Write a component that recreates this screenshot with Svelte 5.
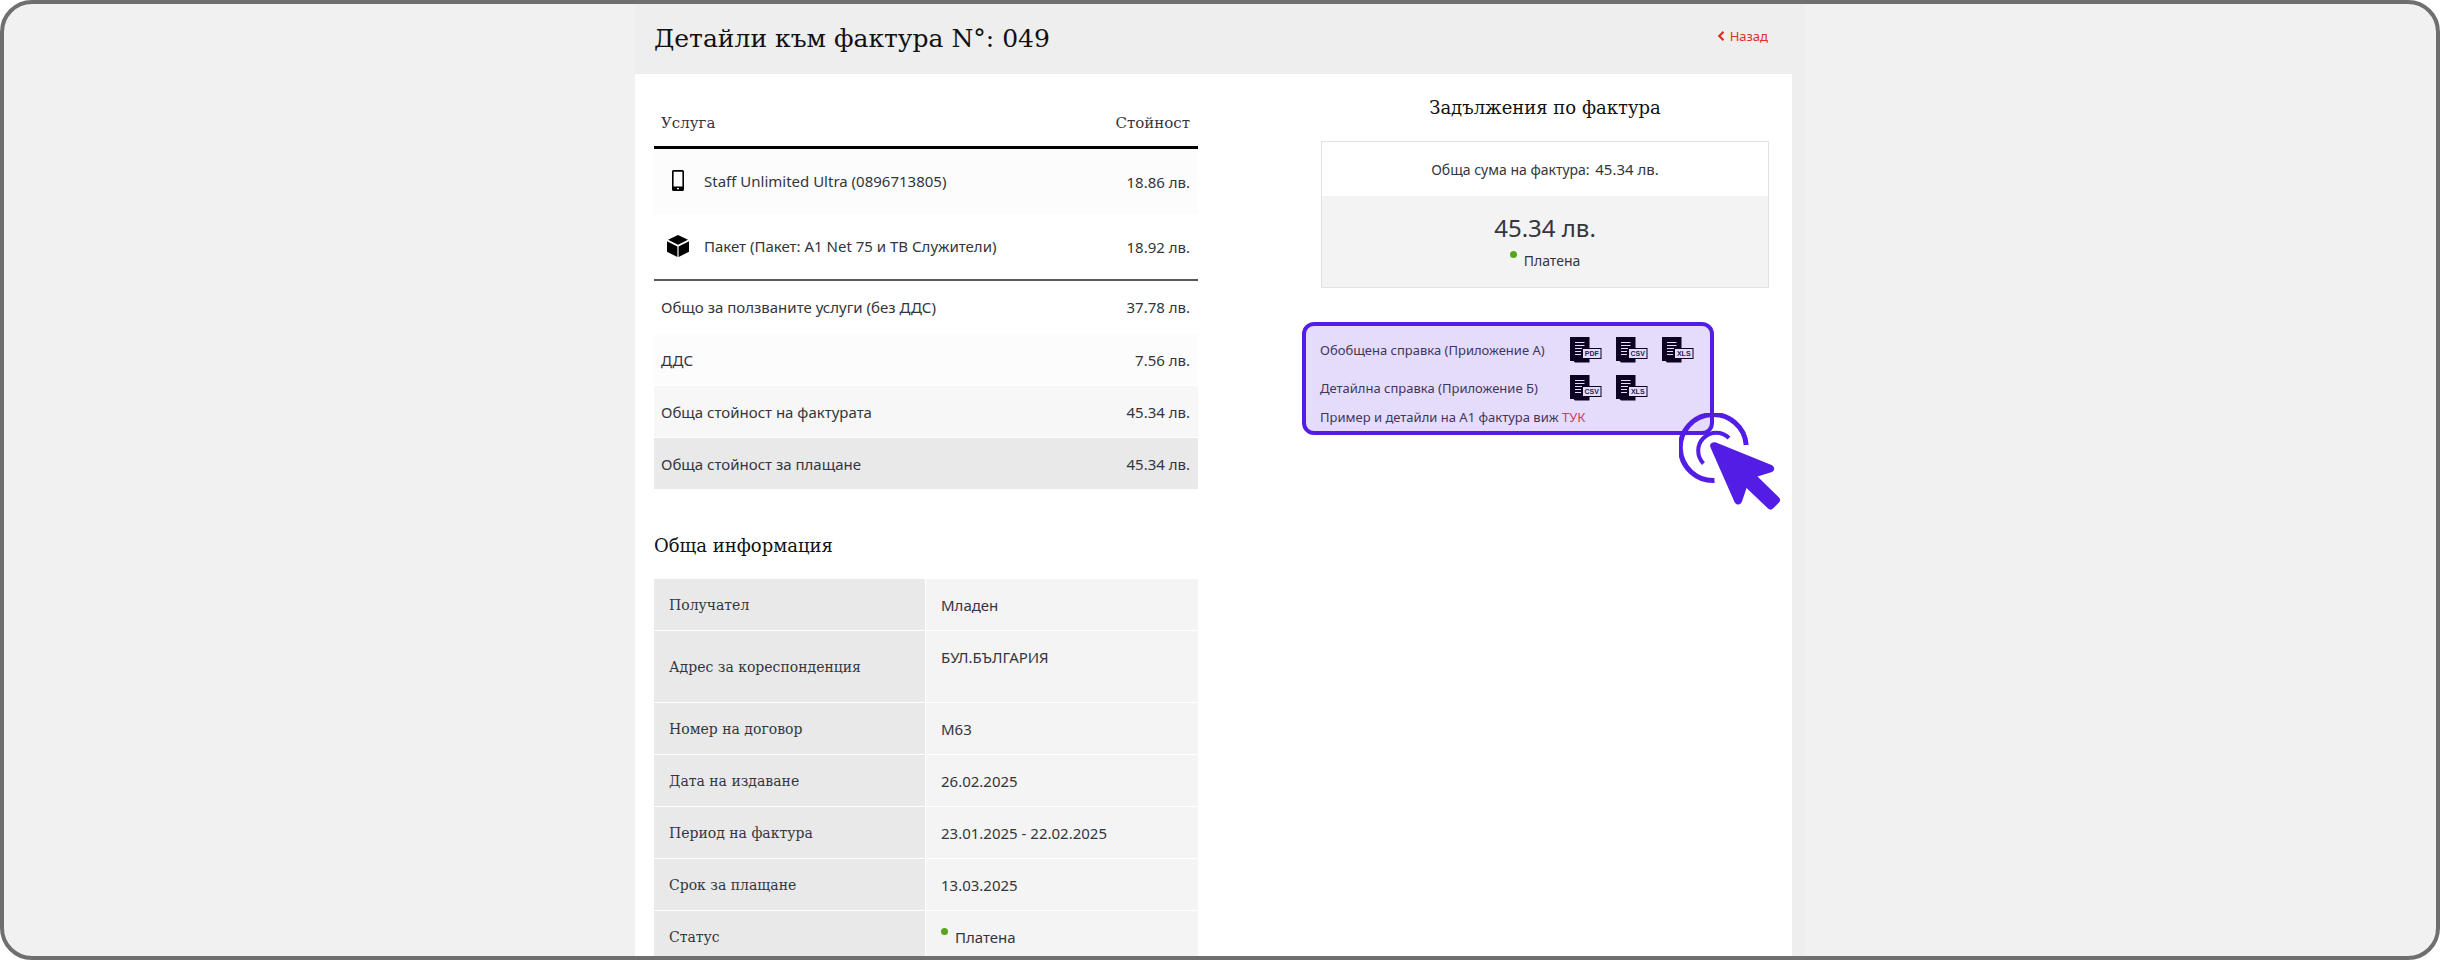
<script>
  const services = [
    { icon: 'phone', name: 'Staff Unlimited Ultra (0896713805)', value: '18.86 лв.' },
    { icon: 'box', name: 'Пакет (Пакет: A1 Net 75 и ТВ Служители)', value: '18.92 лв.' }
  ];

  const totals = [
    { label: 'Общо за ползваните услуги (без ДДС)', value: '37.78 лв.', tone: 'plain' },
    { label: 'ДДС', value: '7.56 лв.', tone: 'faint' },
    { label: 'Обща стойност на фактурата', value: '45.34 лв.', tone: 'light' },
    { label: 'Обща стойност за плащане', value: '45.34 лв.', tone: 'strong' }
  ];

  const info = [
    { label: 'Получател', value: 'Младен' },
    { label: 'Адрес за кореспонденция', value: 'БУЛ.БЪЛГАРИЯ', tall: true },
    { label: 'Номер на договор', value: 'M63' },
    { label: 'Дата на издаване', value: '26.02.2025' },
    { label: 'Период на фактура', value: '23.01.2025 - 22.02.2025' },
    { label: 'Срок за плащане', value: '13.03.2025' },
    { label: 'Статус', value: 'Платена', status: true }
  ];

  const reports = [
    { label: 'Обобщена справка (Приложение А)', formats: ['PDF', 'CSV', 'XLS'] },
    { label: 'Детайлна справка (Приложение Б)', formats: ['CSV', 'XLS'] }
  ];
</script>

<div class="frame" lang="bg">
  <main class="page">
    <header class="head">
      <h1>Детайли към фактура N°: 049</h1>
      <a class="back" href="#back">
        <svg width="8" height="10" viewBox="0 0 8 10" aria-hidden="true">
          <path d="M6.500 0.800 2.300 5l4.200 4.200" fill="none" stroke="currentColor" stroke-width="2.200" />
        </svg>
        Назад
      </a>
    </header>

    <div class="body">
      <section class="left">
        <table class="costs">
          <thead>
            <tr><th scope="col">Услуга</th><th scope="col">Стойност</th></tr>
          </thead>
          <tbody>
            {#each services as s}
              <tr class="service">
                <td>
                  <div class="svc">
                    <span class="ico">
                      {#if s.icon === 'phone'}
                        <svg width="12" height="21" viewBox="0 0 12 21" aria-hidden="true">
                          <path fill-rule="evenodd" d="M1.500 0h9A1.500 1.500 0 0 1 12 1.500v18a1.500 1.500 0 0 1-1.500 1.500h-9A1.500 1.500 0 0 1 0 19.500v-18A1.500 1.500 0 0 1 1.500 0ZM1.600 1.800v14.700h8.800V1.800ZM5 18v1.300h2V18Z" />
                        </svg>
                      {:else}
                        <svg width="22" height="22" viewBox="0 0 22 22" aria-hidden="true">
                          <path d="M11 0 21 4.800 11 9.800 1 4.800ZM0 6.300l10.400 5.200V22L0 16.800ZM22 6.300v10.500L11.600 22V11.500Z" />
                        </svg>
                      {/if}
                    </span>
                    {s.name}
                  </div>
                </td>
                <td>{s.value}</td>
              </tr>
            {/each}
          </tbody>
          <tbody class="totals">
            {#each totals as t}
              <tr class={t.tone}><td>{t.label}</td><td>{t.value}</td></tr>
            {/each}
          </tbody>
        </table>

        <h2>Обща информация</h2>

        <table class="info">
          <tbody>
            {#each info as row}
              <tr class:tall={row.tall}>
                <th scope="row">{row.label}</th>
                <td>{#if row.status}<span class="dot"></span>{/if}{row.value}</td>
              </tr>
            {/each}
          </tbody>
        </table>
      </section>

      <aside class="right">
        <h2>Задължения по фактура</h2>
        <div class="due">
          <p class="sum">Обща сума на фактура: <span>45.34 лв.</span></p>
          <div class="paid">
            <strong>45.34 лв.</strong>
            <p><span class="dot"></span>Платена</p>
          </div>
        </div>

        <div class="reports">
          {#each reports as r}
            <div class="report">
              <span class="name">{r.label}</span>
              {#each r.formats as f}
                <a href="#{f}" aria-label="{r.label} {f}">
                  <svg width="34" height="28" viewBox="0 0 34 28" aria-hidden="true">
                    <path d="M1 1h19.500v25.500H6L4.500 25H1Z" fill="#0d0221" />
                    <path d="M6 6.500h9.500M6 9.500h9.500M6 12.500h9M6 15.500h6M6 18.500h6" stroke="#e5dcfb" stroke-width="1" />
                    <rect x="13.500" y="12.500" width="18.500" height="10" fill="#e5dcfb" stroke="#0d0221" />
                    <text x="22.750" y="20" text-anchor="middle">{f}</text>
                  </svg>
                </a>
              {/each}
            </div>
          {/each}
          <p class="sample">Пример и детайли на А1 фактура виж <a href="#sample">ТУК</a></p>

          <svg class="pointer" width="102" height="98" viewBox="0 0 102 98" aria-hidden="true">
            <g fill="none" stroke="#541de6">
              <path d="M67.200 32A33 33 0 1 0 35.500 67.500" stroke-width="5" />
              <path d="M50 25A17.500 17.500 0 0 0 24.500 50.500" stroke-width="4" />
            </g>
            <path fill="#541de6" d="M31.500 34.500C30 31 33 28.500 37 29.500L92.500 52C96 54 96 57 93 59L78.500 63.500 100 84.500C101.500 86 101.500 88 100 89.500L94 95.500C92.500 97 90.500 97 89 95.500L67.500 75 63 88.500C61.500 92.500 57.500 92.500 55.500 89Z" />
          </svg>
        </div>
      </aside>
    </div>
  </main>
</div>

<style>
  :global(body) {
    margin: 0;
    background: #fff;
  }

  .frame {
    box-sizing: border-box;
    height: 100vh;
    overflow: hidden;
    border: 4px solid #6f6f6f;
    border-radius: 32px;
    background: #f1f1f1;
    color: #33363d;
    font-family: 'Noto Sans', sans-serif;
    font-size: 15px;
    line-height: 20px;
  }

  .page {
    box-sizing: border-box;
    max-width: 1170px;
    min-height: 100%;
    margin: 0 auto;
    padding-right: 13px;
    background: #eee;
  }

  .head {
    display: flex;
    justify-content: space-between;
    align-items: center;
    height: 70px;
    padding: 0 24px 0 19px;
    box-sizing: border-box;
  }

  h1,
  h2 {
    margin: 0;
    color: #111;
    font-family: 'DejaVu Serif', serif;
    font-weight: 400;
  }

  h1 {
    font-size: 25px;
    line-height: 36px;
  }

  h2 {
    font-size: 18px;
    line-height: 24px;
  }

  .back {
    display: flex;
    align-items: center;
    gap: 5px;
    margin-bottom: 6px;
    color: #e0301e;
    font-size: 13px;
    text-decoration: none;
  }

  .body {
    display: grid;
    grid-template-columns: 544fr 448fr;
    gap: 123px;
    padding: 22px 23px 40px 19px;
    background: #fff;
  }

  table {
    width: 100%;
    border-collapse: separate;
    border-spacing: 0;
  }

  td,
  th {
    font-weight: 400;
    text-align: left;
  }

  .costs td,
  .costs th {
    padding: 0 7px;
  }

  .costs th {
    height: 47px;
    padding-top: 3px;
    border-bottom: 3px solid #000;
    font-family: 'DejaVu Serif', serif;
  }

  .costs td:last-child,
  .costs th:last-child {
    padding-right: 8px;
    text-align: right;
  }

  .service td {
    height: 65px;
  }

  .service:first-child td {
    background: #fcfcfc;
  }

  .service:last-child td {
    border-bottom: 2px solid #5a5a5a;
  }

  .svc {
    display: flex;
    align-items: center;
    gap: 10px;
    padding-bottom: 2px;
  }

  .ico {
    display: flex;
    justify-content: center;
    width: 33px;
  }

  .totals td {
    height: 51px;
    border-bottom: 1px solid #fff;
  }

  .totals .plain td {
    height: 52px;
  }

  .faint td {
    background: #fcfcfc;
  }

  .light td {
    background: #f7f7f7;
  }

  .strong td {
    background: #e9e9e9;
  }

  .left h2 {
    margin: 44px 0 21px;
  }

  .info th,
  .info td {
    box-sizing: border-box;
    height: 52px;
    padding: 0 15px;
    border-bottom: 1px solid #fff;
  }

  .info th {
    width: 50%;
    border-right: 1px solid #fff;
    background: #e9e9e9;
    font-family: 'DejaVu Serif', serif;
    font-size: 14px;
  }

  .info td {
    background: #f4f4f4;
  }

  .info .tall th,
  .info .tall td {
    height: 72px;
  }

  .info .tall td {
    padding-bottom: 20px;
  }

  .dot {
    display: inline-block;
    width: 7px;
    height: 7px;
    margin-right: 7px;
    border-radius: 50%;
    background: #5aa51e;
    vertical-align: 8px;
  }

  .right {
    text-align: center;
  }

  .due {
    margin-top: 21px;
    border: 1px solid #dfe3e6;
  }

  p {
    margin: 0;
  }

  .sum {
    padding: 17px 0 16px;
    font-size: 14px;
  }

  .sum span {
    padding-left: 2px;
    font-size: 15px;
  }

  .paid {
    padding: 14px 0 16px;
    background: #f3f3f3;
    font-size: 14px;
  }

  .paid strong {
    display: block;
    margin-bottom: 5px;
    font-size: 24px;
    font-weight: 400;
    line-height: 36px;
  }

  .reports {
    position: relative;
    box-sizing: border-box;
    width: 412px;
    margin: 34px 0 0 -19px;
    padding: 5px 14px 4px;
    border: 4px solid #541de6;
    border-radius: 12px;
    background: #e5dcfb;
    color: #40365c;
    font-size: 13px;
    text-align: left;
  }

  .report {
    display: flex;
    align-items: center;
    gap: 12px;
    height: 38px;
  }

  .report .name {
    width: 237px;
    white-space: nowrap;
  }

  .report a {
    display: flex;
  }

  .report text {
    fill: #2a1d4a;
    font-family: 'Liberation Sans', sans-serif;
    font-size: 7px;
    font-weight: 700;
  }

  .sample a {
    color: #c93c60;
    text-decoration: none;
  }

  .pointer {
    position: absolute;
    top: 87px;
    left: 373px;
  }
</style>
